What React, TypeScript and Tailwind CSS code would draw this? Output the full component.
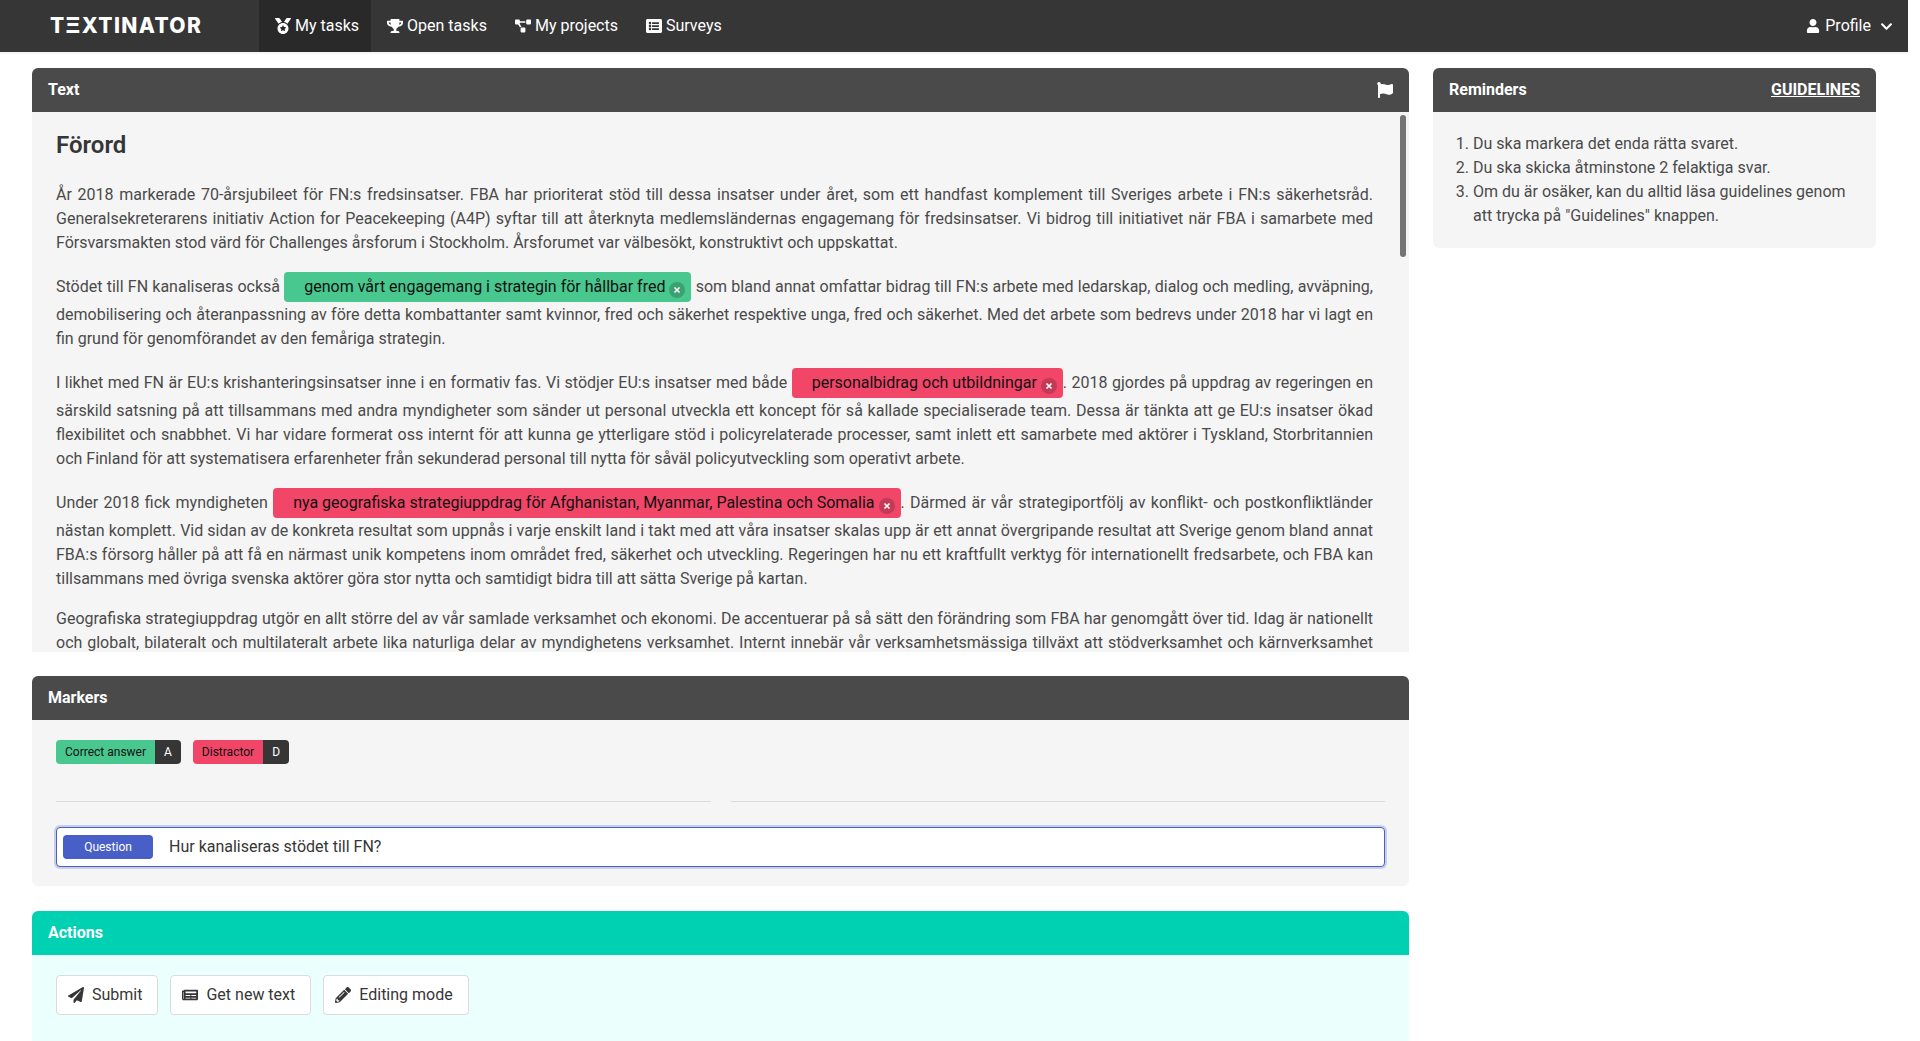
import React from "react";
import {
  FaMedal,
  FaTrophy,
  FaProjectDiagram,
  FaListAlt,
  FaUser,
  FaChevronDown,
  FaFlag,
  FaPaperPlane,
  FaNewspaper,
  FaPencilAlt,
} from "react-icons/fa";

function NavItem({ icon, label, active }: { icon: React.ReactNode; label: string; active?: boolean }) {
  return (
    <a className={`flex h-full items-center px-3 text-white ${active ? "bg-[#292929]" : ""}`}>
      <span className="flex w-6 justify-center text-[16px]">{icon}</span>
      <span>{label}</span>
    </a>
  );
}

function Header({ children, bg = "bg-[#4a4a4a]" }: { children: React.ReactNode; bg?: string }) {
  return (
    <div className={`flex h-11 items-center justify-between rounded-t-md px-4 font-bold text-white ${bg}`}>
      {children}
    </div>
  );
}

function Mark({ color, children }: { color: string; children: React.ReactNode }) {
  return (
    <span className={`my-px inline-block h-[30px] rounded pl-5 pr-1.5 py-[3px] text-[#111] ${color}`}>
      {children}
      <span className="ml-1 inline-flex h-4 w-4 items-center justify-center rounded-full bg-[rgba(10,10,10,0.2)] align-[-2px]">
        <svg width="8" height="8" viewBox="0 0 8 8">
          <path d="M1.5 1.5l5 5M6.5 1.5l-5 5" stroke="#fff" strokeWidth="1.6" />
        </svg>
      </span>
    </span>
  );
}

function MarkerTag({ color, label, k }: { color: string; label: string; k: string }) {
  return (
    <span className="flex h-6 text-[12px] leading-6">
      <span className={`rounded-l px-[9px] text-[#111] ${color}`}>{label}</span>
      <span className="rounded-r bg-[#363636] px-[9px] text-white">{k}</span>
    </span>
  );
}

function Btn({ icon, label }: { icon: React.ReactNode; label: string }) {
  return (
    <button className="flex h-10 items-center rounded border border-[#dbdbdb] bg-white pl-[7px] pr-[15px] text-[#363636]">
      <span className="mr-1 flex w-6 justify-center">{icon}</span>
      <span>{label}</span>
    </button>
  );
}

export default function App() {
  return (
    <div className="mr-3 bg-white font-[Roboto,sans-serif] text-[16px] leading-6 text-[#4a4a4a]">
      <nav className="flex h-[52px] items-center justify-between bg-[#363636] shadow-[0_2px_0_0_#f5f5f5]">
        <div className="flex h-full items-center">
          <div className="ml-[50px] mr-[52px] w-[157px] font-[Inter,sans-serif] text-[21px] font-extrabold tracking-[1.4px] whitespace-nowrap text-white">
            TΞXTINATOR
          </div>
          <NavItem active icon={<FaMedal />} label="My tasks" />
          <NavItem icon={<FaTrophy />} label="Open tasks" />
          <NavItem icon={<FaProjectDiagram />} label="My projects" />
          <NavItem icon={<FaListAlt />} label="Surveys" />
        </div>
        <div className="flex items-center pr-[15px] text-white">
          <span className="flex w-6 justify-center text-[14px]"><FaUser /></span>
          <span>Profile</span>
          <FaChevronDown className="ml-[9px] text-[13px]" />
        </div>
      </nav>

      <main className="flex gap-6 pl-8 pr-8 pt-4 pb-[6px]">
        <div className="flex w-[1377px] flex-col">
          <section>
            <Header>
              <span>Text</span>
              <FaFlag className="text-[16px]" />
            </Header>
            <div className="relative h-[540px] overflow-hidden bg-[#f5f5f5]">
              <div className="pt-5 pl-6 pr-9 text-justify">
                <h1 className="mb-6 text-[24px] leading-[27px] font-semibold text-[#363636]">Förord</h1>
                <p className="mb-4">
                  År 2018 markerade 70-årsjubileet för FN:s fredsinsatser. FBA har prioriterat stöd till dessa insatser under året, som ett handfast komplement till Sveriges arbete i FN:s säkerhetsråd. Generalsekreterarens initiativ Action for Peacekeeping (A4P) syftar till att återknyta medlemsländernas engagemang för fredsinsatser. Vi bidrog till initiativet när FBA i samarbete med Försvarsmakten stod värd för Challenges årsforum i Stockholm. Årsforumet var välbesökt, konstruktivt och uppskattat.
                </p>
                <p className="mb-4">
                  Stödet till FN kanaliseras också <Mark color="bg-[#48c78e]">genom vårt engagemang i strategin för hållbar fred</Mark> som bland annat omfattar bidrag till FN:s arbete med ledarskap, dialog och medling, avväpning, demobilisering och återanpassning av före detta kombattanter samt kvinnor, fred och säkerhet respektive unga, fred och säkerhet. Med det arbete som bedrevs under 2018 har vi lagt en fin grund för genomförandet av den femåriga strategin.
                </p>
                <p className="mb-4">
                  I likhet med FN är EU:s krishanteringsinsatser inne i en formativ fas. Vi stödjer EU:s insatser med både <Mark color="bg-[#f14668]">personalbidrag och utbildningar</Mark>. 2018 gjordes på uppdrag av regeringen en särskild satsning på att tillsammans med andra myndigheter som sänder ut personal utveckla ett koncept för så kallade specialiserade team. Dessa är tänkta att ge EU:s insatser ökad flexibilitet och snabbhet. Vi har vidare formerat oss internt för att kunna ge ytterligare stöd i policyrelaterade processer, samt inlett ett samarbete med aktörer i Tyskland, Storbritannien och Finland för att systematisera erfarenheter från sekunderad personal till nytta för såväl policyutveckling som operativt arbete.
                </p>
                <p className="mb-4">
                  Under 2018 fick myndigheten <Mark color="bg-[#f14668]">nya geografiska strategiuppdrag för Afghanistan, Myanmar, Palestina och Somalia</Mark>. Därmed är vår strategiportfölj av konflikt- och postkonfliktländer nästan komplett. Vid sidan av de konkreta resultat som uppnås i varje enskilt land i takt med att våra insatser skalas upp är ett annat övergripande resultat att Sverige genom bland annat FBA:s försorg håller på att få en närmast unik kompetens inom området fred, säkerhet och utveckling. Regeringen har nu ett kraftfullt verktyg för internationellt fredsarbete, och FBA kan tillsammans med övriga svenska aktörer göra stor nytta och samtidigt bidra till att sätta Sverige på kartan.
                </p>
                <p>
                  Geografiska strategiuppdrag utgör en allt större del av vår samlade verksamhet och ekonomi. De accentuerar på så sätt den förändring som FBA har genomgått över tid. Idag är nationellt och globalt, bilateralt och multilateralt arbete lika naturliga delar av myndighetens verksamhet. Internt innebär vår verksamhetsmässiga tillväxt att stödverksamhet och kärnverksamhet behöver utvecklas parallellt med varandra.
                </p>
              </div>
              <div className="absolute top-[3px] right-[3px] h-[142px] w-1.5 rounded-full bg-[#757575]" />
            </div>
          </section>

          <section className="mt-6">
            <Header>Markers</Header>
            <div className="h-[166px] rounded-b-md bg-[#f5f5f5] px-6 pt-5">
              <div className="flex gap-3">
                <MarkerTag color="bg-[#48c78e]" label="Correct answer" k="A" />
                <MarkerTag color="bg-[#f14668]" label="Distractor" k="D" />
              </div>
              <div className="mt-[37px] flex gap-5">
                <div className="h-px flex-1 bg-[#dbdbdb]" />
                <div className="h-px flex-1 bg-[#dbdbdb]" />
              </div>
              <div className="mt-[25px] flex h-10 items-center rounded border border-[#485fc7] bg-white pl-1.5 shadow-[0_0_0_2px_rgba(72,95,199,0.25)]">
                <span className="h-6 w-[90px] rounded bg-[#485fc7] text-center text-[12px] leading-6 text-white">Question</span>
                <span className="ml-4 text-[#363636]">Hur kanaliseras stödet till FN?</span>
              </div>
            </div>
          </section>

          <section className="mt-[25px]">
            <Header bg="bg-[#00d1b2]">Actions</Header>
            <div className="flex h-[124px] items-start gap-3 rounded-b-md bg-[#ebfffc] px-6 py-5">
              <Btn icon={<FaPaperPlane />} label="Submit" />
              <Btn icon={<FaNewspaper />} label="Get new text" />
              <Btn icon={<FaPencilAlt />} label="Editing mode" />
            </div>
          </section>
        </div>

        <aside className="w-[443px] self-start">
          <Header>
            <span>Reminders</span>
            <a className="underline">GUIDELINES</a>
          </Header>
          <div className="rounded-b-md bg-[#f5f5f5] px-6 py-5">
            <ol className="list-decimal pl-4">
              <li>Du ska markera det enda rätta svaret.</li>
              <li>Du ska skicka åtminstone 2 felaktiga svar.</li>
              <li>Om du är osäker, kan du alltid läsa guidelines genom att trycka på "Guidelines" knappen.</li>
            </ol>
          </div>
        </aside>
      </main>
    </div>
  );
}
